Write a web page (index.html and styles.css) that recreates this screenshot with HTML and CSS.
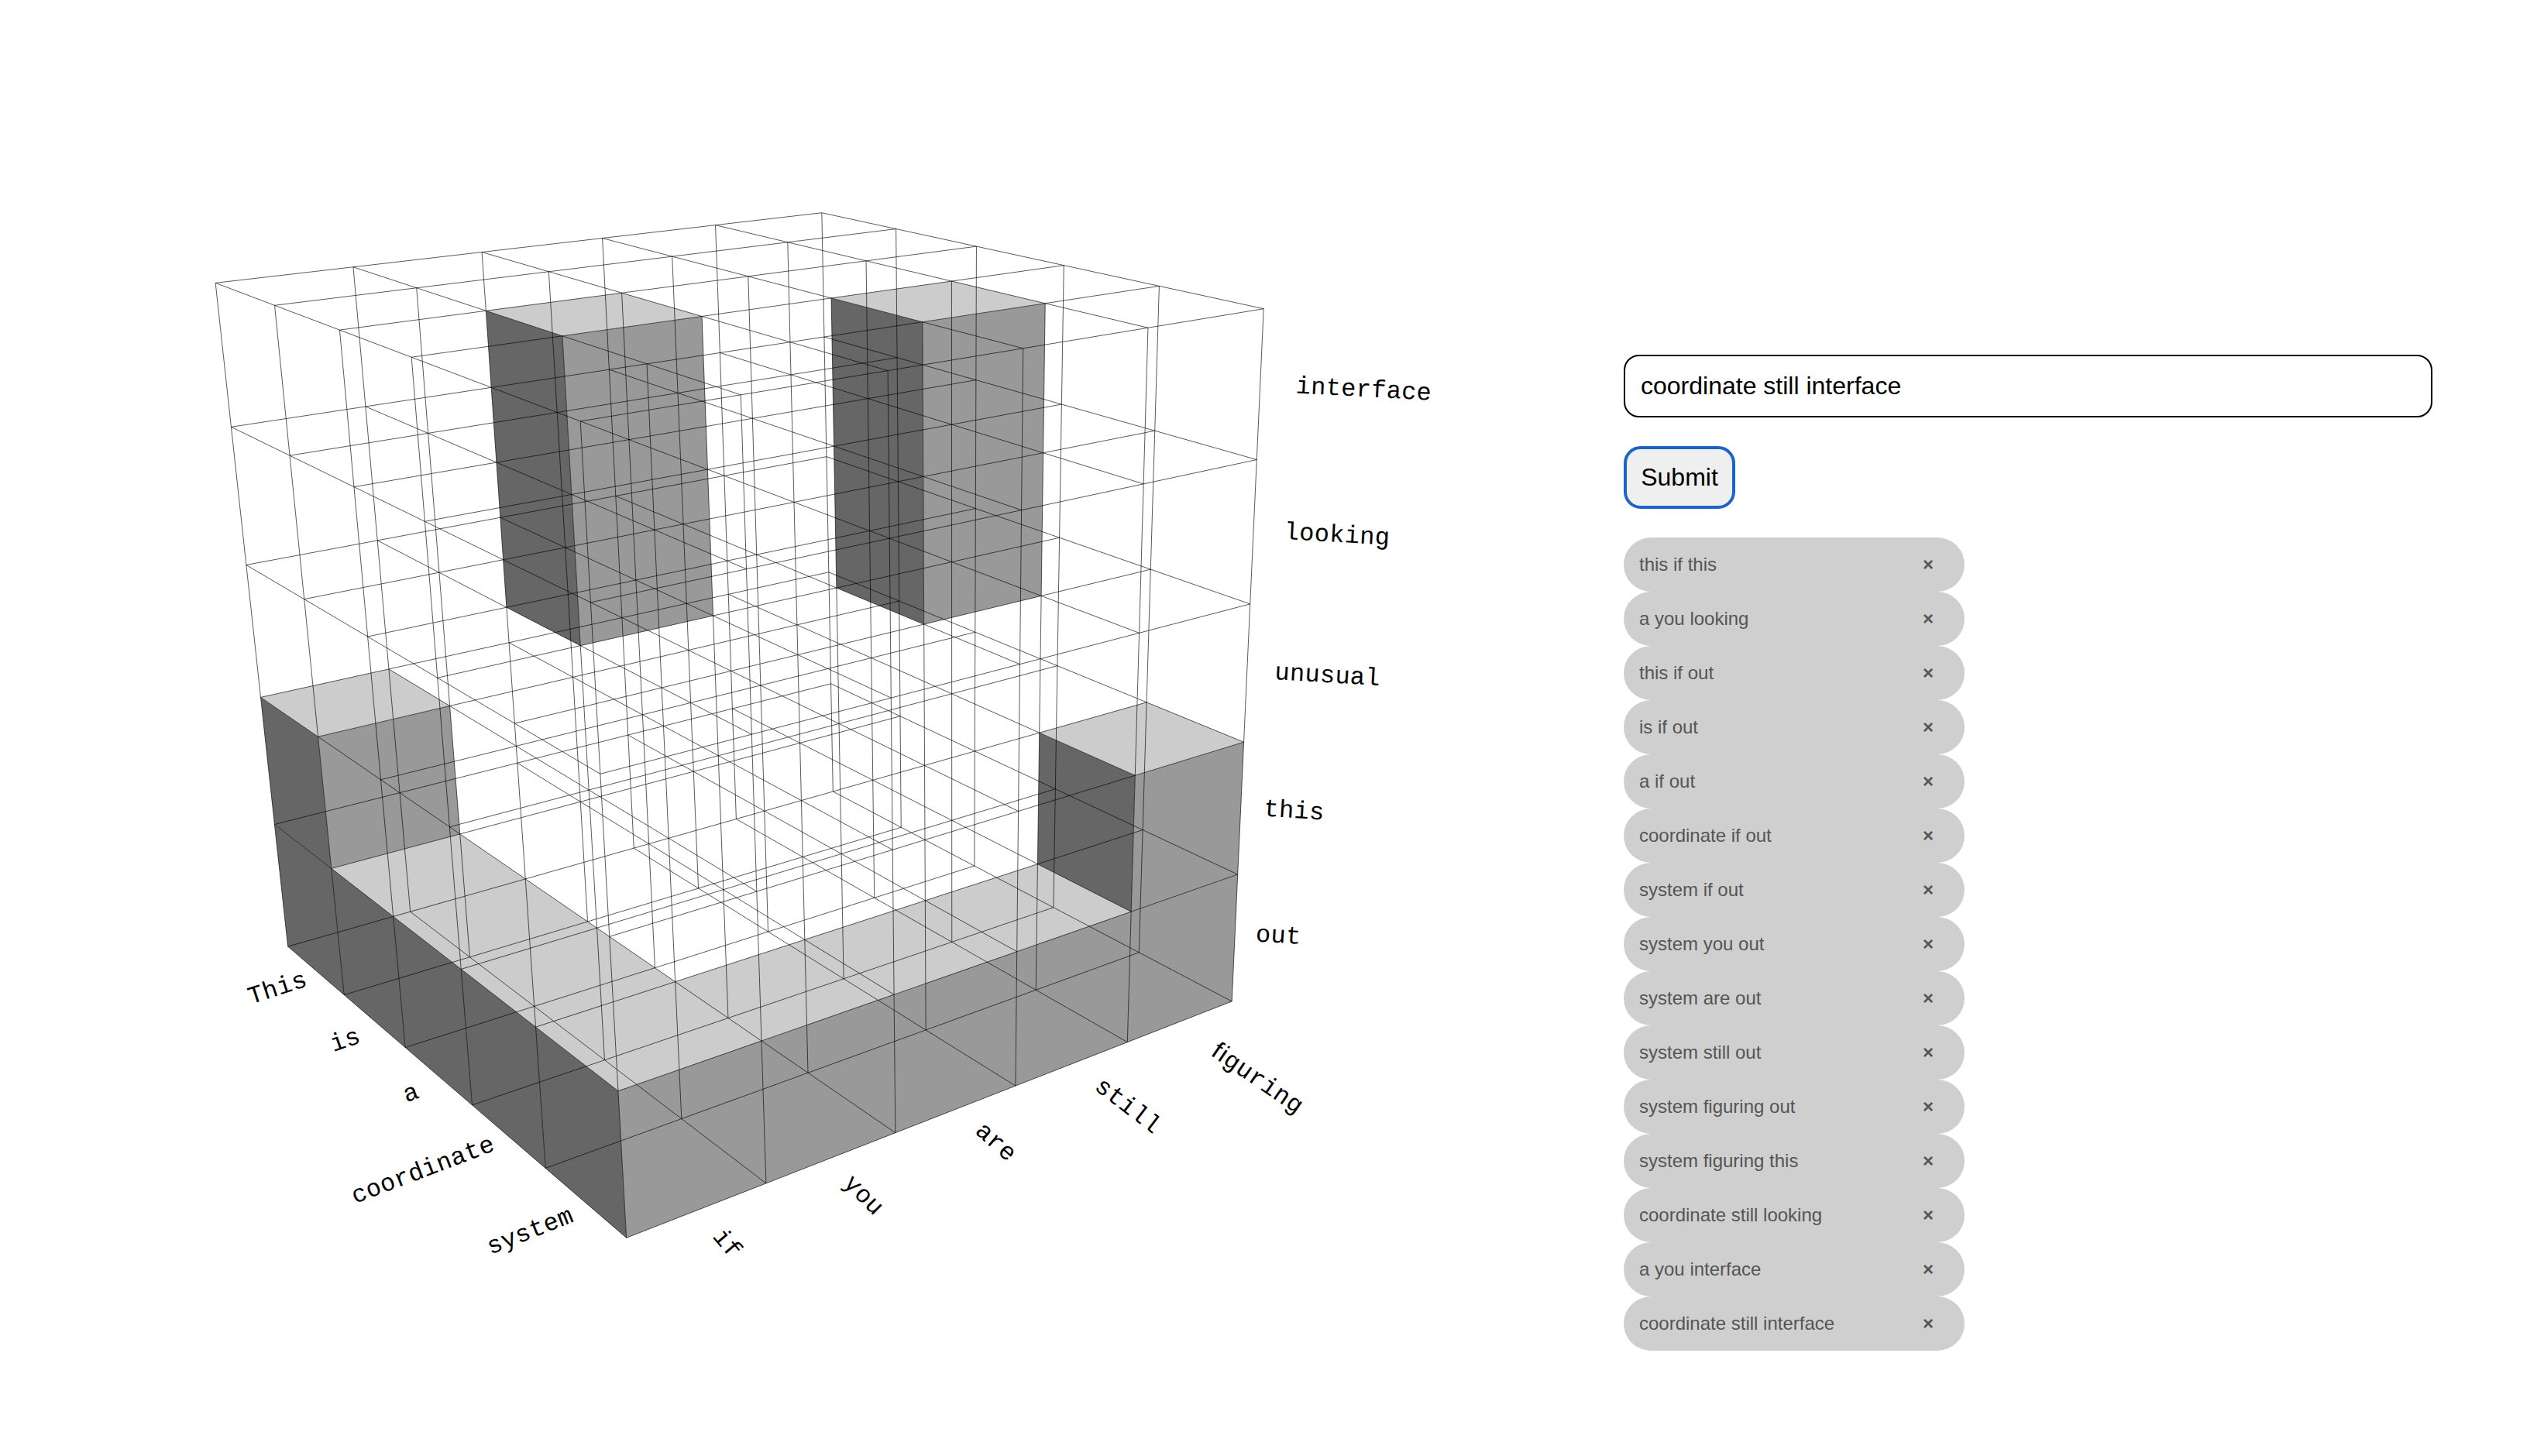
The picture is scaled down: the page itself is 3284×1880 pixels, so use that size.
FILE: index.html
```html
<!DOCTYPE html>
<html lang="en">
<head>
<meta charset="utf-8">
<title>This is a coordinate system</title>
<link rel="stylesheet" href="styles.css">
</head>
<body>
<main class="page">
  <svg class="scene" viewBox="0 0 2096 1880" aria-label="Voxel grid">
    <g id="faces"></g>
    <path id="grid" class="grid"/>
    <g class="labels">
      <text transform="translate(324 1296.8) rotate(-18)">This</text>
      <text transform="translate(430.2 1358.3) rotate(-19)">is</text>
      <text transform="translate(524.6 1423.5) rotate(-20)">a</text>
      <text transform="translate(458.2 1554.2) rotate(-20.8)">coordinate</text>
      <text transform="translate(633.3 1620) rotate(-21.6)">system</text>
      <text transform="translate(919 1596.9) rotate(50)">if</text>
      <text transform="translate(1087.6 1529) rotate(45.5)">you</text>
      <text transform="translate(1257.5 1462.3) rotate(41.5)">are</text>
      <text transform="translate(1411.6 1405.7) rotate(37.5)">still</text>
      <text transform="translate(1561.2 1361.6) rotate(34.5)">ﬁguring</text>
      <text transform="translate(1672.3 507.5) rotate(3)">interface</text>
      <text transform="translate(1657.3 696) rotate(3.2)">looking</text>
      <text transform="translate(1645 877) rotate(3.4)">unusual</text>
      <text transform="translate(1631 1053.5) rotate(3.6)">this</text>
      <text transform="translate(1620.5 1215.4) rotate(3.6)">out</text>
    </g>
  </svg>
  <section class="panel">
    <input class="query" type="text" value="coordinate still interface">
    <button class="submit" type="button">Submit</button>
    <ul class="entries">
      <li class="entry"><span>this if this</span><b class="remove">×</b></li>
      <li class="entry"><span>a you looking</span><b class="remove">×</b></li>
      <li class="entry"><span>this if out</span><b class="remove">×</b></li>
      <li class="entry"><span>is if out</span><b class="remove">×</b></li>
      <li class="entry"><span>a if out</span><b class="remove">×</b></li>
      <li class="entry"><span>coordinate if out</span><b class="remove">×</b></li>
      <li class="entry"><span>system if out</span><b class="remove">×</b></li>
      <li class="entry"><span>system you out</span><b class="remove">×</b></li>
      <li class="entry"><span>system are out</span><b class="remove">×</b></li>
      <li class="entry"><span>system still out</span><b class="remove">×</b></li>
      <li class="entry"><span>system figuring out</span><b class="remove">×</b></li>
      <li class="entry"><span>system figuring this</span><b class="remove">×</b></li>
      <li class="entry"><span>coordinate still looking</span><b class="remove">×</b></li>
      <li class="entry"><span>a you interface</span><b class="remove">×</b></li>
      <li class="entry"><span>coordinate still interface</span><b class="remove">×</b></li>
    </ul>
  </section>
</main>
<script src="scene.js"></script>
</body>
</html>
```
FILE: styles.css
```css
* {
  box-sizing: border-box;
}

body {
  margin: 0;
  background: #fff;
  font-family: "Liberation Sans", Arial, sans-serif;
}

.page {
  display: flex;
  height: 1880px;
}

.scene {
  flex: none;
  width: 2096px;
  height: 1880px;
}

.grid {
  fill: none;
  stroke: #000;
  stroke-opacity: 0.65;
  stroke-width: 1;
}

.top { fill: #ccc; }
.side { fill: #666; }
.front { fill: #999; }

.labels {
  font-family: "Liberation Mono", monospace;
  font-size: 32px;
  letter-spacing: 0.3px;
  fill: #000;
}

.panel {
  display: flex;
  flex-direction: column;
  align-items: flex-start;
  width: 1044px;
  padding-top: 458px;
}

.query {
  width: 100%;
  height: 81px;
  padding: 0 20px;
  border: 2px solid #000;
  border-radius: 20px;
  background: #fff;
  color: #000;
  font: 32px "Liberation Sans", Arial, sans-serif;
}

.submit {
  width: 144px;
  height: 81px;
  margin-top: 37px;
  padding: 0 0 1px;
  border: 4px solid #1f62c9;
  border-radius: 22px;
  background: #efefef;
  color: #000;
  font: 32px "Liberation Sans", Arial, sans-serif;
}

.entries {
  margin: 37px 0 0;
  padding: 0;
  list-style: none;
}

.entry {
  display: flex;
  justify-content: space-between;
  align-items: center;
  width: 440px;
  height: 70px;
  padding: 0 40px 0 20px;
  border-radius: 35px;
  background: #cfcfcf;
  color: #555;
  font-size: 24px;
}

.remove {
  font-weight: 700;
}
```
FILE: scene.js
```js
// Perspective view from the point (16, -6, 8): cell coordinates to SVG pixels.
function project(i, j, k) {
  i -= 16;
  j += 6;
  k -= 8;
  const w = -0.041636 * i + 0.0323348 * j - 0.02 * k;
  return [
    (55.5005 * i + 178.3435 * j - 24.6329 * k) / w,
    (10.2145 * i - 7.7901 * j - 182.1199 * k) / w
  ];
}

function pathOf(points) {
  return 'M' + points.map(p => p[0].toFixed(3) + ' ' + p[1].toFixed(3)).join('L');
}

const SIZE = 5;

// Occupied cells: [i, j, k, height].
const cells = [
  [0, 0, 1, 1], [2, 1, 3, 2], [0, 0, 0, 1], [1, 0, 0, 1], [2, 0, 0, 1],
  [3, 0, 0, 1], [4, 0, 0, 1], [4, 1, 0, 1], [4, 2, 0, 1], [4, 3, 0, 1],
  [4, 4, 0, 1], [4, 4, 1, 1], [3, 3, 3, 2]
];

// Far cells first, so that near ones cover them.
cells.sort((a, b) => a[0] - b[0] || b[1] - a[1] || a[2] - b[2]);

function face(name, corners) {
  return '<path class="' + name + '" d="' + pathOf(corners.map(c => project(...c))) + 'Z"/>';
}

document.getElementById('faces').innerHTML = cells.map(([i, j, k, h]) => {
  const t = k + h;
  return face('side', [[i, j, k], [i + 1, j, k], [i + 1, j, t], [i, j, t]]) +
    face('front', [[i + 1, j, k], [i + 1, j + 1, k], [i + 1, j + 1, t], [i + 1, j, t]]) +
    face('top', [[i, j, t], [i + 1, j, t], [i + 1, j + 1, t], [i, j + 1, t]]);
}).join('');

// Distance of point p from the endless line through segment s.
function offLine(p, s) {
  const dx = s[1][0] - s[0][0], dy = s[1][1] - s[0][1];
  return Math.abs(dx * (p[1] - s[0][1]) - dy * (p[0] - s[0][0])) / Math.hypot(dx, dy);
}

// Lines that fall on one another in this view are joined, so that none is drawn twice.
const segments = [];

function addLine(a, b) {
  let line = [project(...a), project(...b)];
  for (let n = segments.length - 1; n >= 0; n--) {
    const s = segments[n];
    if (Math.max(offLine(line[0], s), offLine(line[1], s)) < 0.2) {
      const axis = Math.abs(s[1][0] - s[0][0]) > Math.abs(s[1][1] - s[0][1]) ? 0 : 1;
      const ends = [...s, ...line].sort((p, q) => p[axis] - q[axis]);
      line = [ends[0], ends[3]];
      segments.splice(n, 1);
    }
  }
  segments.push(line);
}

for (let a = 0; a <= SIZE; a++) {
  for (let b = 0; b <= SIZE; b++) {
    addLine([0, a, b], [SIZE, a, b]);
    addLine([a, 0, b], [a, SIZE, b]);
    addLine([a, b, 0], [a, b, SIZE]);
  }
}
document.getElementById('grid').setAttribute('d', segments.map(pathOf).join(''));
```
